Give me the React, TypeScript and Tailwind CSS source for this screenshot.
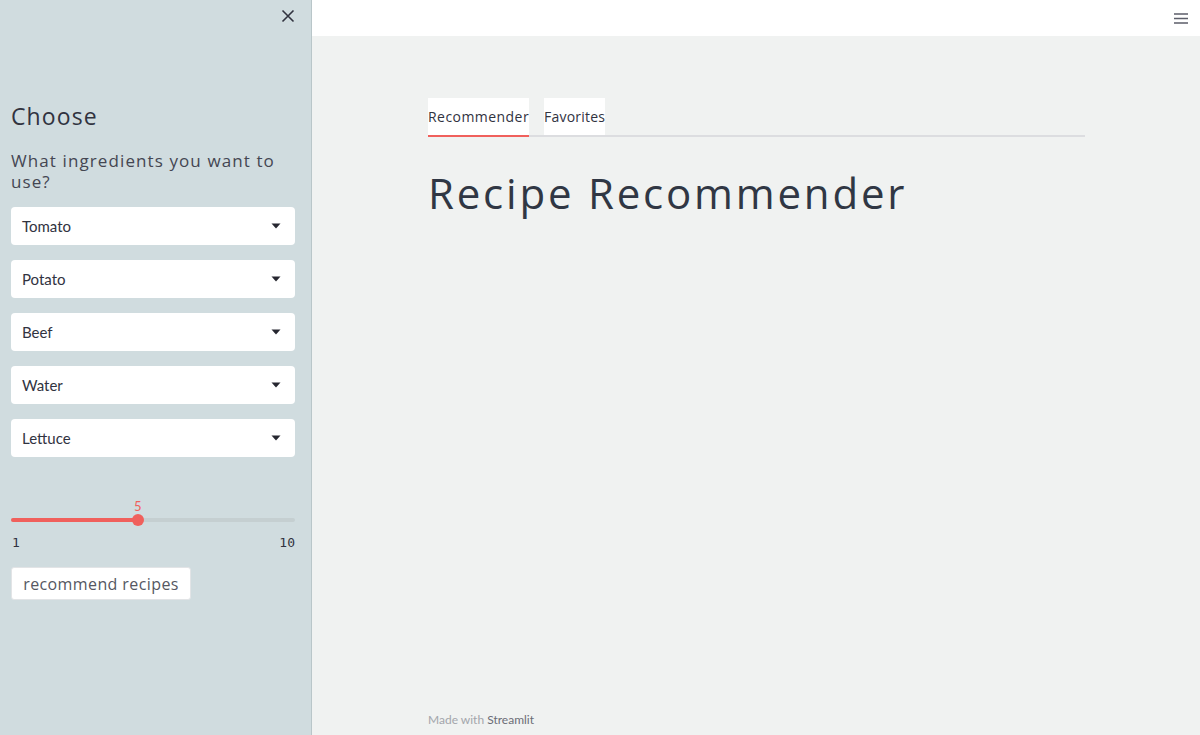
import React from "react";

const ingredients = ["Tomato", "Potato", "Beef", "Water", "Lettuce"];

function Caret() {
  return (
    <svg width="10" height="6" viewBox="0 0 10 6" className="shrink-0">
      <path d="M0.5 0.5 L9.5 0.5 L5 5.5 Z" fill="#262730" />
    </svg>
  );
}

export default function App() {
  const mont = { fontFamily: '"Open Sans", "Noto Sans", sans-serif' };
  return (
    <div className="flex h-[735px] w-[1200px] overflow-hidden" style={mont}>
      <aside className="relative flex w-[312px] shrink-0 flex-col border-r border-[#b9c6c9] bg-[#d0dcdf] px-[11px]">
        <button className="absolute right-[16px] top-[9px] text-[#31333f]">
          <svg width="14" height="14" viewBox="0 0 14 14">
            <path d="M1.5 1.5 L12.5 12.5 M12.5 1.5 L1.5 12.5" stroke="#31333f" strokeWidth="1.6" />
          </svg>
        </button>
        <h2 className="mt-[100px] text-[23px] leading-[32px] tracking-[1.1px] text-[#31333f]">Choose</h2>
        <p className="mt-[18px] w-[284px] text-[17px] leading-[21px] font-medium tracking-[1.1px] text-[#444652]">
          What ingredients you want to use?
        </p>
        <div className="mt-[15px] flex flex-col gap-[15px]">
          {ingredients.map((i) => (
            <div
              key={i}
              className="flex h-[38px] w-[284px] items-center justify-between rounded-[4px] bg-white pl-[11px] pr-[14px] text-[15px] text-[#31333f]"
              style={{ fontFamily: '"Lato", "Noto Sans", sans-serif' }}
            >
              <span>{i}</span>
              <Caret />
            </div>
          ))}
        </div>
        <div className="relative mt-[41px] h-[37px] w-[284px]">
          <span className="absolute left-[123px] top-[0px] text-[13px] leading-[16px] text-[#f0605c]" style={{ fontFamily: '"Lato", sans-serif' }}>
            5
          </span>
          <div className="absolute left-0 top-[20px] h-[4px] w-[284px] rounded-full bg-[#c5cfd1]" />
          <div className="absolute left-0 top-[20px] h-[4px] w-[127px] rounded-full bg-[#f0605c]" />
          <div className="absolute left-[121px] top-[16px] h-[12px] w-[12px] rounded-full bg-[#f0605c]" />
        </div>
        <div
          className="flex w-[284px] justify-between text-[13px] leading-[16px] text-[#31333f]"
          style={{ fontFamily: '"DejaVu Sans Mono", monospace' }}
        >
          <span className="ml-[1px]">1</span>
          <span>10</span>
        </div>
        <button className="mt-[16px] h-[33px] w-[180px] rounded-[3px] border border-[#e2e4e6] bg-white text-[16px] tracking-[0.4px] text-[#555762]">
          recommend recipes
        </button>
      </aside>
      <main className="flex flex-1 flex-col bg-[#f0f2f1]">
        <header className="flex h-[36px] items-center justify-end bg-white pr-[12px]">
          <svg width="14" height="11" viewBox="0 0 14 11">
            <path d="M0 1 H14 M0 5.5 H14 M0 10 H14" stroke="#5c5e6a" strokeWidth="1.6" />
          </svg>
        </header>
        <div className="flex flex-1 flex-col pl-[116px]">
          <div className="mt-[62px] flex w-[657px] gap-[15px] border-b-2 border-[#dcdde0]">
            <div className="-mb-[2px] flex h-[39px] items-center border-b-2 border-[#f0605c] bg-white text-[14px] tracking-[0.45px] text-[#31333f]">
              Recommender
            </div>
            <div className="flex h-[37px] items-center bg-white text-[14px] tracking-[0.2px] text-[#31333f]">Favorites</div>
          </div>
          <h1 className="mt-[28px] text-[42px] leading-[56px] tracking-[2.8px] text-[#303744]">Recipe Recommender</h1>
          <div className="mt-auto mb-[6px] text-[12px] text-[#a3a5ab]" style={{ fontFamily: '"Lato", sans-serif' }}>
            Made with <span className="text-[#6b6d76]">Streamlit</span>
          </div>
        </div>
      </main>
    </div>
  );
}
